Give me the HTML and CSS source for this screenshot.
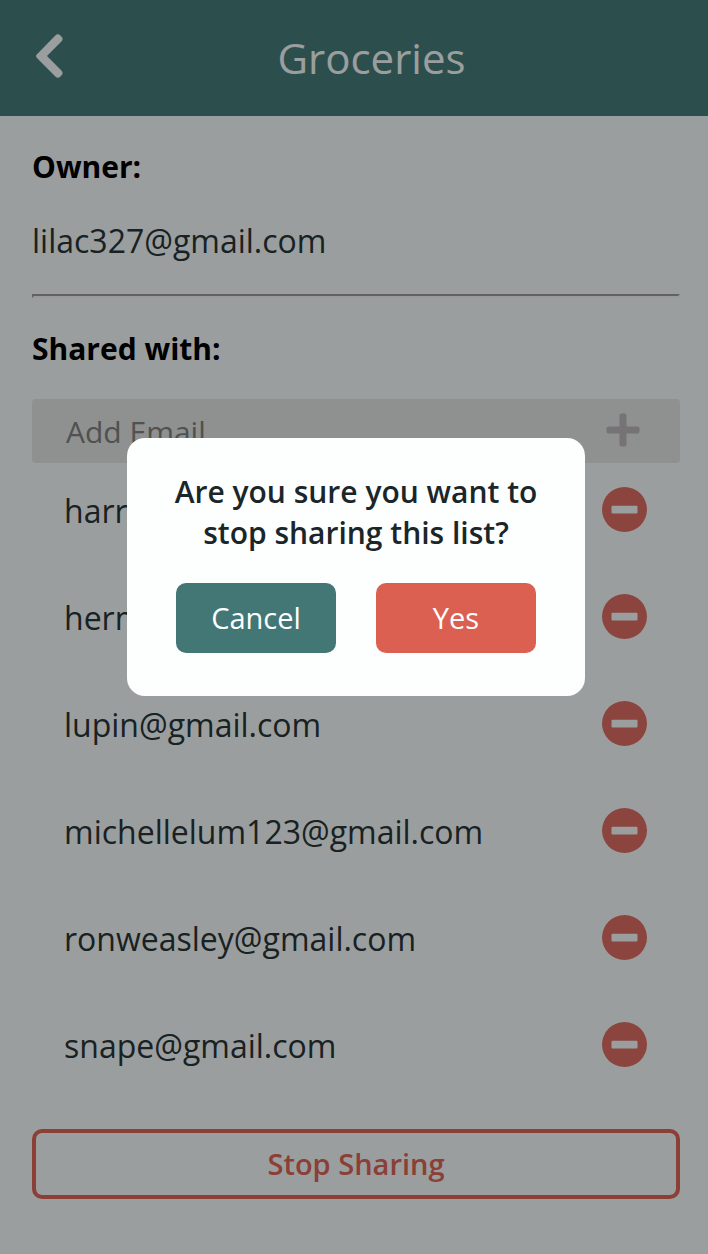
FILE: index.html
```html
<!DOCTYPE html>
<html lang="en">
<head>
<meta charset="utf-8">
<meta name="viewport" content="width=device-width, initial-scale=1">
<title>Groceries</title>
<link rel="stylesheet" href="styles.css">
</head>
<body>
<svg class="sprite" aria-hidden="true">
  <symbol id="minus" viewBox="0 0 45 45">
    <path fill-rule="evenodd" d="M22.500 0a22.500 22.500 0 1 1 0 45a22.500 22.500 0 0 1 0-45zM10.500 18.700q-1 0-1 1v5.700q0 1 1 1h24q1 0 1-1v-5.700q0-1-1-1z"/>
  </symbol>
</svg>
<header class="header">
  <button class="icon-button back" type="button" aria-label="Back">
    <svg class="chevron" viewBox="0 0 28 46"><path d="M23 5.500L4.800 23L23 40.500L4.800 23z" stroke="none"/><path d="M2 21.200L20.300 2.400Q22.800 0 25.400 2.400L26.400 3.500Q28.800 6 26.400 8.500L12 23L26.400 37.500Q28.800 40 26.400 42.500L25.400 43.600Q22.800 46 20.300 43.600L2 24.900Q0 23 2 21.200z"/></svg>
  </button>
  <h1 class="title">Groceries</h1>
</header>
<main class="content">
  <h2 class="label">Owner:</h2>
  <p class="owner">lilac327@gmail.com</p>
  <hr class="divider">
  <h2 class="label">Shared with:</h2>
  <form class="add">
    <input class="add-input" type="email" placeholder="Add Email" aria-label="Add Email">
    <button class="icon-button" type="button" aria-label="Add">
      <svg class="plus" viewBox="0 0 34 34"><path d="M15.500 0.500h3q2 0 2 2V13.500H31.500q2 0 2 2v3q0 2-2 2H20.500V31.500q0 2-2 2h-3q-2 0-2-2V20.500H2.500q-2 0-2-2v-3q0-2 2-2H13.500V2.500q0-2 2-2z"/></svg>
    </button>
  </form>
  <ul class="people">
    <li class="person"><span class="email">harry@gmail.com</span><button class="icon-button" type="button" aria-label="Remove harry@gmail.com"><svg class="minus"><use href="#minus"/></svg></button></li>
    <li class="person"><span class="email">hermione@gmail.com</span><button class="icon-button" type="button" aria-label="Remove hermione@gmail.com"><svg class="minus"><use href="#minus"/></svg></button></li>
    <li class="person"><span class="email">lupin@gmail.com</span><button class="icon-button" type="button" aria-label="Remove lupin@gmail.com"><svg class="minus"><use href="#minus"/></svg></button></li>
    <li class="person"><span class="email">michellelum123@gmail.com</span><button class="icon-button" type="button" aria-label="Remove michellelum123@gmail.com"><svg class="minus"><use href="#minus"/></svg></button></li>
    <li class="person"><span class="email">ronweasley@gmail.com</span><button class="icon-button" type="button" aria-label="Remove ronweasley@gmail.com"><svg class="minus"><use href="#minus"/></svg></button></li>
    <li class="person"><span class="email">snape@gmail.com</span><button class="icon-button" type="button" aria-label="Remove snape@gmail.com"><svg class="minus"><use href="#minus"/></svg></button></li>
  </ul>
  <button class="stop" type="button">Stop Sharing</button>
</main>
<div class="overlay">
  <section class="dialog" role="alertdialog" aria-modal="true" aria-labelledby="question">
    <h2 class="question" id="question">Are you sure you want to stop sharing this list?</h2>
    <div class="actions">
      <button class="action cancel" type="button">Cancel</button>
      <button class="action yes" type="button">Yes</button>
    </div>
  </section>
</div>
</body>
</html>
```
FILE: styles.css
```css
* {
  box-sizing: border-box;
}

body {
  margin: 0;
  min-height: 100vh;
  background: #f2f8f8;
  color: #283436;
  font-family: "Open Sans", "Noto Sans", sans-serif;
  font-size: 32px;
  line-height: 44px;
}

button,
input {
  font: inherit;
}

button {
  cursor: pointer;
}

svg {
  display: block;
}

.sprite {
  position: absolute;
  width: 0;
  height: 0;
}

.icon-button {
  flex: none;
  padding: 0;
  border: 0;
  background: none;
}

.header {
  display: flex;
  align-items: center;
  height: 116px;
  padding: 0 28px 5px 35px;
  background: #457a78;
  color: #f2f8f8;
}

.chevron {
  width: 28px;
  height: 46px;
  fill: currentColor;
}

.back {
  color: inherit;
}

.title {
  flex: 1;
  margin: 0;
  padding-top: 4px;
  text-align: center;
  font-size: 42px;
  font-weight: 400;
  line-height: 56px;
}

.content {
  padding: 30px 28px 55px 32px;
}

.label {
  margin: 0;
  color: #000;
  font-size: 30px;
  font-weight: 700;
  line-height: 42px;
}

.owner {
  margin: 31px 0;
}

.divider {
  height: 4px;
  margin: 0 0 30px;
  border: 2px solid;
  border-color: #969c9a #eef2f1 #eef2f1 #969c9a;
}

.add {
  display: flex;
  align-items: center;
  height: 64px;
  margin-top: 29px;
  padding: 0 40px 2px 34px;
  border-radius: 4px;
  background: #e0e2e1;
}

.add-input {
  flex: 1;
  min-width: 0;
  padding: 4px 0 0;
  border: 0;
  outline: 0;
  background: none;
  font-size: 30px;
}

.add-input::placeholder {
  color: #7d7f7e;
  opacity: 1;
}

.plus {
  width: 34px;
  height: 34px;
  fill: #b7b4b9;
}

.people {
  display: grid;
  gap: 62px;
  margin: 24px 0 62px;
  padding: 0 33px 0 32px;
  list-style: none;
}

.person {
  display: flex;
  align-items: center;
  justify-content: space-between;
  gap: 16px;
}

.minus {
  width: 45px;
  height: 45px;
  fill: #d96c61;
}

.email {
  margin-bottom: -2px;
}

.stop {
  width: 100%;
  height: 70px;
  padding: 0;
  border: 4px solid #d96355;
  border-radius: 10px;
  background: none;
  color: #d96355;
  font-size: 29px;
  font-weight: 600;
}

.overlay {
  position: fixed;
  inset: 0;
  display: flex;
  align-items: center;
  justify-content: center;
  padding: 0 0 120px 4px;
  background: rgba(0, 0, 0, 0.36);
}

.dialog {
  width: 458px;
  max-width: 90%;
  padding: 33px 40px 43px;
  border-radius: 18px;
  background: #fdfefe;
}

.question {
  margin: 0 0 30px;
  color: #1a2629;
  text-align: center;
  font-size: 30px;
  font-weight: 600;
  line-height: 41px;
}

.actions {
  display: flex;
  justify-content: center;
  gap: 40px;
}

.action {
  width: 160px;
  height: 70px;
  padding: 0;
  border: 0;
  border-radius: 10px;
  color: #fdfefe;
  font-size: 29px;
}

.cancel {
  background: #427776;
}

.yes {
  background: #dc6051;
}
```
